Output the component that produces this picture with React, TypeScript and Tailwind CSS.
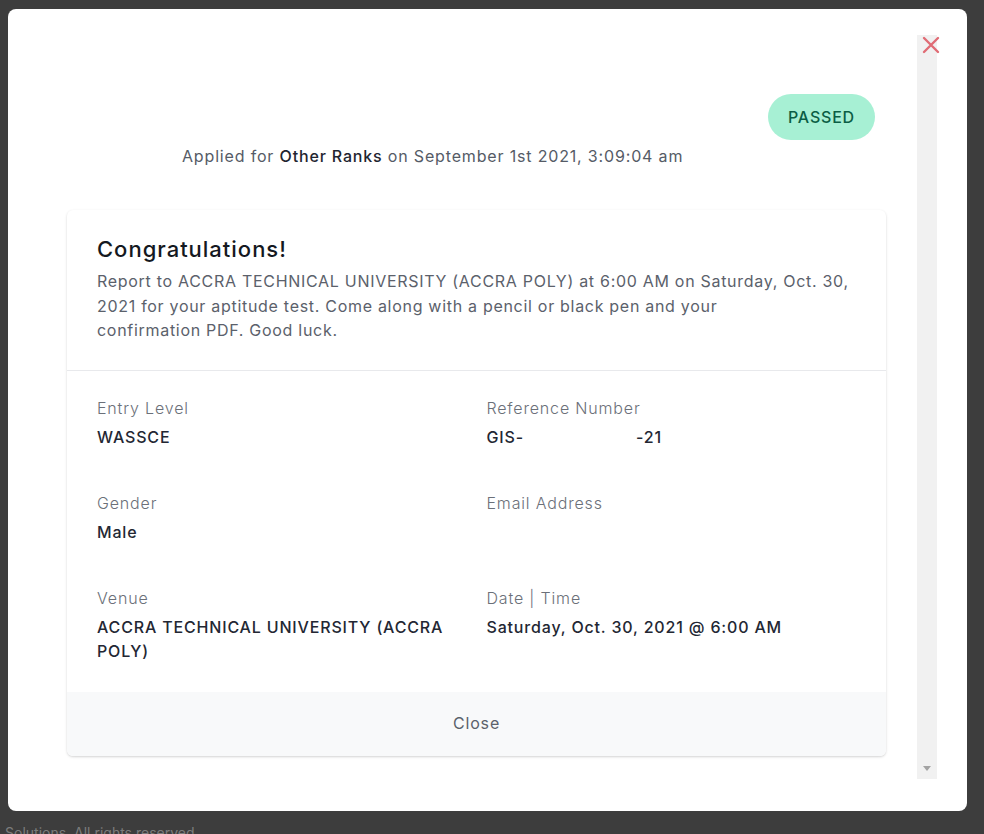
import React from 'react';

const font = { fontFamily: 'Inter, "Open Sans", "Liberation Sans", sans-serif' };

const details = [
  { label: 'Entry Level', value: 'WASSCE' },
  { label: 'Reference Number', value: 'GIS-\u00a0\u00a0\u00a0\u00a0\u00a0\u00a0\u00a0\u00a0\u00a0\u00a0\u00a0\u00a0\u00a0\u00a0\u00a0\u00a0\u00a0\u00a0\u00a0\u00a0\u00a0\u00a0-21' },
  { label: 'Gender', value: 'Male' },
  { label: 'Email Address', value: '\u00a0' },
  { label: 'Venue', value: 'ACCRA TECHNICAL UNIVERSITY (ACCRA POLY)' },
  { label: 'Date | Time', value: 'Saturday, Oct. 30, 2021 @ 6:00 AM' },
];

export default function App() {
  return (
    <div className="h-[834px] w-full overflow-hidden bg-[#3d3d3d] tracking-[0.052em]" style={font}>
      <div className="ml-[8px] pt-[9px]">
        {/* modal */}
        <div className="relative flex h-[802px] w-[959px] rounded-lg bg-white">
          {/* content */}
          <div className="flex-1 pl-[59px] pr-[31px]">
            {/* header */}
            <div className="flex justify-between pt-[85px] pl-[115px] pr-[11px]">
              <div>
                <div className="h-[50px]" />
                <p className="text-base leading-6 text-[#555b66]">
                  Applied for <span className="font-medium text-[#1f2530]">Other Ranks</span> on September 1st 2021, 3:09:04 am
                </p>
              </div>
              <span className="flex h-[46px] w-[107px] items-center justify-center rounded-full bg-[#a7f0d4] text-base font-medium tracking-[0.05em] text-[#0b5e45]">
                PASSED
              </span>
            </div>

            {/* card */}
            <div className="mt-[42px] overflow-hidden rounded-md bg-white shadow-[0_1px_3px_rgba(0,0,0,0.12),0_1px_2px_rgba(0,0,0,0.06)]">
              <div className="border-b border-[#e8e9ec] px-[30px] pt-[25px] pb-[27px]">
                <h3 className="text-[22px] leading-7 font-medium tracking-[0.045em] text-[#141821]">Congratulations!</h3>
                <p className="mt-[6px] text-base leading-[24.5px] tracking-[0.044em] text-[#5b616b]">
                  Report to ACCRA TECHNICAL UNIVERSITY (ACCRA POLY) at 6:00 AM on Saturday, Oct. 30, 2021 for your aptitude test. Come along with a pencil or black pen and your
                  <br />
                  confirmation PDF. Good luck.
                </p>
              </div>
              <dl className="grid grid-cols-2 gap-x-5 gap-y-[42px] px-[30px] pt-[25px] pb-[29px]">
                {details.map((d) => (
                  <div key={d.label}>
                    <dt className="text-base leading-6 font-light text-[#6b7079]">{d.label}</dt>
                    <dd className="mt-[5px] text-base leading-6 font-medium text-[#232733]">{d.value}</dd>
                  </div>
                ))}
              </dl>
              <button className="flex h-[64px] w-full items-center justify-center bg-[#f8f9fa] pb-[2px] text-base text-[#5b616b]">
                Close
              </button>
            </div>
          </div>

          {/* scrollbar */}
          <div className="mt-[26px] mr-[30px] flex h-[744px] w-[20px] flex-col justify-end bg-[#f1f1f1]">
            <div className="flex h-[20px] items-center justify-center">
              <svg width="8" height="6" viewBox="0 0 8 6">
                <path d="M0 0h8L4 5z" fill="#a3a3a3" />
              </svg>
            </div>
          </div>

          {/* close icon */}
          <button className="absolute top-[26px] right-[26px]" aria-label="Close">
            <svg width="20" height="20" viewBox="0 0 20 20" fill="none" stroke="#e06c75" strokeWidth="2.4" strokeLinecap="round">
              <path d="M3 3l14 14M17 3L3 17" />
            </svg>
          </button>
        </div>
      </div>
      <p className="mt-[12px] pl-[5px] text-sm tracking-normal text-[#7c7c7c]">Solutions. All rights reserved</p>
    </div>
  );
}
